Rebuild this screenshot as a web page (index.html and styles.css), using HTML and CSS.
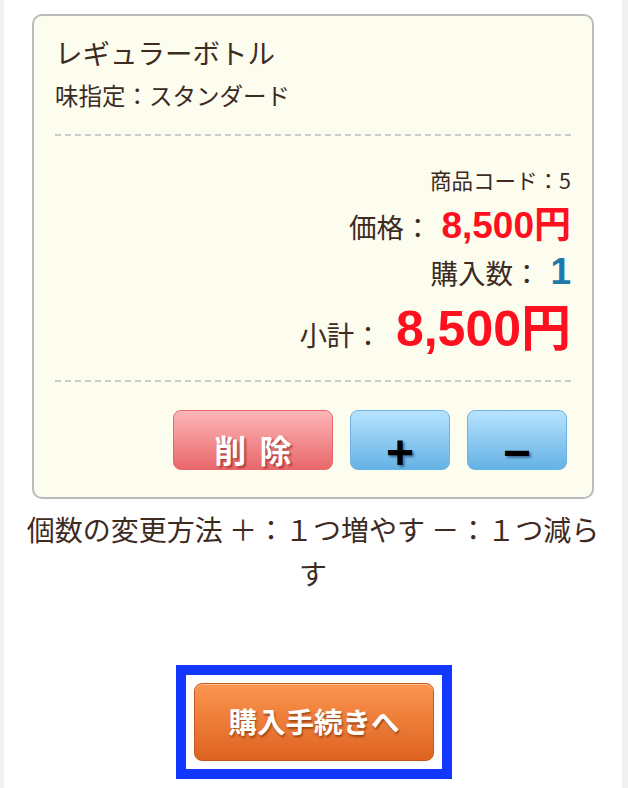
FILE: index.html
```html
<!DOCTYPE html>
<html lang="ja">
<head>
  <meta charset="UTF-8">
  <meta name="viewport" content="width=device-width, initial-scale=1.0">
  <title>カート</title>
  <link rel="stylesheet" href="styles.css">
</head>
<body>
<div class="page">
  <div class="cart-item">
    <div class="item-head">
      <p class="item-name">レギュラーボトル</p>
      <p class="item-option">味指定：スタンダード</p>
    </div>
    <div class="item-body">
      <p class="item-code">商品コード：5</p>
      <p class="item-row">価格：<span class="price">8,500円</span></p>
      <p class="item-row">購入数：<span class="qty">1</span></p>
      <p class="item-row subtotal">小計：<span class="price big">8,500円</span></p>
    </div>
    <div class="item-buttons">
      <button class="btn-del">削 除</button>
      <button class="btn-qty">+</button>
      <button class="btn-qty">&minus;</button>
    </div>
  </div>

  <p class="note">個数の変更方法 ＋：１つ増やす －：１つ減らす</p>

  <div class="checkout">
    <div class="focus-box">
      <button class="btn-checkout">購入手続きへ</button>
    </div>
  </div>
</div>
</body>
</html>
```

FILE: styles.css
```css
html, body {
  margin: 0;
  padding: 0;
}
body {
  background-color: #f1f1f1;
  font-family: "Noto Sans CJK JP", sans-serif;
  color: #3d2b1f;
  overflow: hidden;
}
p {
  margin: 0;
}
.page {
  width: 618px;
  min-height: 788px;
  margin-left: 4px;
  background-color: #fff;
  padding-top: 14px;
  box-sizing: border-box;
}

/* cart card */
.cart-item {
  margin: 0 28px;
  background-color: #fcfcef;
  border: 2px solid #bbb;
  border-radius: 10px;
  padding: 0 21px 27px;
}
.item-head {
  padding: 18px 0 25px;
  background: repeating-linear-gradient(to right, #ccc 0 6px, transparent 6px 10px) left bottom / 100% 2px no-repeat;
}
.item-name {
  font-size: 27.5px;
  line-height: 36px;
}
.item-option {
  font-size: 23.5px;
  line-height: 32px;
  margin-top: 9px;
}
.item-body {
  text-align: right;
  padding: 30px 0 14px;
  background: repeating-linear-gradient(to right, #ccc 0 6px, transparent 6px 10px) left bottom / 100% 2px no-repeat;
}
.item-code {
  font-size: 21.5px;
  line-height: 28px;
}
.item-row {
  font-size: 27.5px;
  line-height: 46px;
}
.item-code + .item-row {
  margin-top: 9px;
}
.subtotal {
  line-height: 68px;
}
.price, .qty {
  font-family: "Liberation Sans", "Noto Sans CJK JP", sans-serif;
  font-weight: bold;
  font-size: 37px;
  margin-left: 10px;
}
.price {
  color: #ff1020;
}
.price.big {
  font-size: 50px;
  margin-left: 14px;
}
.qty {
  color: #1f78ac;
}

/* buttons */
.item-buttons {
  display: flex;
  justify-content: flex-end;
  gap: 17px;
  padding: 28px 4px 0 0;
}
.item-buttons button {
  border-radius: 8px;
  box-sizing: border-box;
  height: 60px;
  margin: 0;
  cursor: pointer;
}
.btn-del {
  width: 160px;
  padding: 23px 0 5px;
  border: 1px solid #e8676a;
  background: linear-gradient(#feb6b8, #e8686b);
  color: #fff;
  font-family: "Noto Sans CJK JP", sans-serif;
  font-weight: bold;
  font-size: 32px;
  line-height: 30px;
  word-spacing: 6px;
  text-shadow: 2px 2px 2px rgba(130, 20, 20, 0.55);
}
.btn-qty {
  width: 100px;
  padding: 32px 0 6px;
  border: 1px solid #6bb5e6;
  background: linear-gradient(#b7e3fd, #65b2e5);
  color: #000;
  font-family: "Liberation Sans", sans-serif;
  font-weight: bold;
  font-size: 48px;
  line-height: 20px;
  text-shadow: 2px 2px 2px rgba(20, 50, 90, 0.5);
}

.note {
  margin-top: 8px;
  padding: 0 12px;
  text-align: center;
  font-size: 28px;
  line-height: 44px;
}

/* checkout */
.checkout {
  display: flex;
  justify-content: center;
  margin-top: 70px;
  padding-left: 2px;
}
.focus-box {
  border: 10px solid #1238ff;
  padding: 8px;
  background-color: #fff;
}
.btn-checkout {
  display: block;
  width: 240px;
  height: 78px;
  margin: 0;
  padding: 0 0 4px;
  border: 1px solid #c45a22;
  border-radius: 8px;
  background: linear-gradient(#fb9650, #de6220);
  box-shadow: inset 0 1px 0 rgba(255, 220, 180, 0.6);
  color: #fff;
  font-family: "Noto Sans CJK JP", sans-serif;
  font-weight: bold;
  font-size: 28.5px;
  text-shadow: 1px 2px 2px rgba(110, 40, 0, 0.6);
  cursor: pointer;
}
```
